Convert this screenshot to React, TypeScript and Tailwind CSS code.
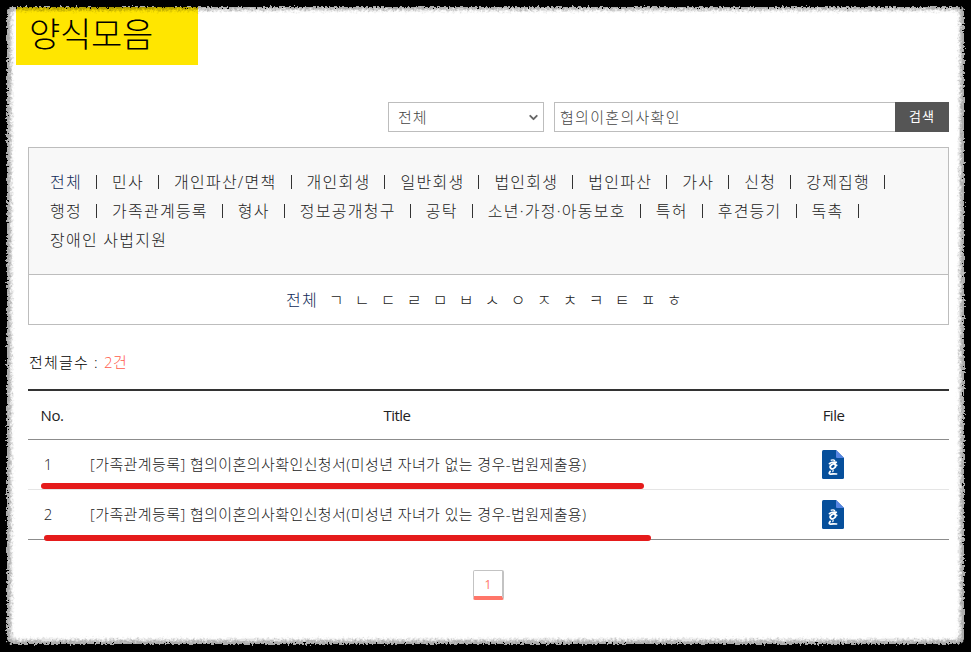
import { useState } from 'react';
import { ChevronDown } from 'lucide-react';

const categoryRows = [
    ['전체', '민사', '개인파산/면책', '개인회생', '일반회생', '법인회생', '법인파산', '가사', '신청', '강제집행'],
    ['행정', '가족관계등록', '형사', '정보공개청구', '공탁', '소년·가정·아동보호', '특허', '후견등기', '독촉'],
    ['장애인 사법지원'],
];

const consonants = ['ㄱ', 'ㄴ', 'ㄷ', 'ㄹ', 'ㅁ', 'ㅂ', 'ㅅ', 'ㅇ', 'ㅈ', 'ㅊ', 'ㅋ', 'ㅌ', 'ㅍ', 'ㅎ'];

const forms = [
    { no: 1, title: '[가족관계등록] 협의이혼의사확인신청서(미성년 자녀가 없는 경우-법원제출용)' },
    { no: 2, title: '[가족관계등록] 협의이혼의사확인신청서(미성년 자녀가 있는 경우-법원제출용)' },
];

const HwpIcon = () => (
    <svg width="22" height="29" viewBox="0 0 22 29">
        <path d="M1.5 0H14L22 8V27.5Q22 29 20.5 29H1.5Q0 29 0 27.5V1.5Q0 0 1.5 0Z" fill="#064f9b" />
        <path d="M14 0L22 8H15Q14 8 14 7Z" fill="#5585e2" />
        <g fill="none" stroke="#fff" strokeLinecap="round" strokeLinejoin="round">
            <path d="M9.3 10.2Q11.8 9.3 12.6 10.6" strokeWidth="1.4" />
            <path d="M7.4 13.6Q9.5 11.7 14.4 12.2L12.8 13.6" strokeWidth="1.6" />
            <ellipse cx="10.9" cy="16.4" rx="2.9" ry="2.1" strokeWidth="1.8" transform="rotate(-35 10.9 16.4)" />
            <path d="M13.4 15L14.8 15.3" strokeWidth="1.5" />
            <path d="M11.2 20.2L10.8 21.6" strokeWidth="1.2" />
            <path d="M8.2 21.4Q6 24 8.6 24.1Q11 23.6 14.6 24" strokeWidth="1.7" />
        </g>
    </svg>
);

// Rough torn edge that runs round the whole page
const TornFrame = () => (
    <svg className="pointer-events-none absolute inset-0" width="971" height="652">
        <defs>
            <filter id="rough" filterUnits="userSpaceOnUse" x="-20" y="-20" width="1011" height="692" colorInterpolationFilters="sRGB">
                <feGaussianBlur stdDeviation="0.6" result="b" />
                <feTurbulence type="fractalNoise" baseFrequency="0.5" numOctaves="2" seed="4" result="n" />
                <feDisplacementMap in="b" in2="n" scale="7" xChannelSelector="R" yChannelSelector="G" />
            </filter>
            <filter id="soft" filterUnits="userSpaceOnUse" x="-20" y="-20" width="1011" height="692" colorInterpolationFilters="sRGB">
                <feGaussianBlur stdDeviation="0.8" result="b" />
                <feTurbulence type="fractalNoise" baseFrequency="0.4" numOctaves="2" seed="9" result="n" />
                <feDisplacementMap in="b" in2="n" scale="6" xChannelSelector="R" yChannelSelector="G" />
            </filter>
        </defs>
        <path fillRule="evenodd" fill="#000" fillOpacity="0.14" filter="url(#soft)"
            d="M-20 -20H991V672H-20Z M18 11H954Q959 11 959 16V633Q959 639 953 639H18Q12 639 12 633V16Q12 11 18 11Z" />
        <path fillRule="evenodd" fill="#000" fillOpacity="0.22" filter="url(#soft)"
            d="M-20 -20H991V672H-20Z M16 9H956Q961 9 961 14V635Q961 641 955 641H16Q10 641 10 635V14Q10 9 16 9Z" />
        <path fillRule="evenodd" fill="#000" filter="url(#rough)"
            d="M-20 -20H991V672H-20Z M12 7H959Q964 7 964 12V638Q964 644 958 644H13Q7 644 7 638V12Q7 7 12 7Z" />
    </svg>
);

const App = () => {
    const [keyword, setKeyword] = useState('협의이혼의사확인');

    return (
        <div className="relative h-[652px] w-[971px] overflow-hidden bg-white pt-[7px] pr-[22px] pl-7 font-['Open_Sans','Noto_Sans_CJK_KR',sans-serif] font-light text-[#222]">
            <h1 className="-ml-3 h-[58px] w-[182px] bg-[#ffe600] pl-[13px] text-[34px] leading-[54px] font-light tracking-[-0.3px] whitespace-nowrap text-black">
                양식모음
            </h1>

            {/* Search */}
            <div className="mt-[37px] flex h-[30px] justify-end text-[15px] text-[#444]">
                <button className="flex w-[156px] items-center justify-between border border-[#bdbdbd] pr-[3px] pl-[9px] tracking-[1px]">
                    <span>전체</span>
                    <ChevronDown size={13} strokeWidth={3.5} className="text-[#666]" />
                </button>
                <input
                    className="ml-[10px] w-[341px] border border-r-0 border-[#bdbdbd] bg-white pl-[5px] tracking-[1.3px] outline-none"
                    value={keyword}
                    onChange={(e) => setKeyword(e.target.value)}
                />
                <button className="w-[54px] bg-[#555] text-[13px] font-normal tracking-[1px] text-white">검색</button>
            </div>

            {/* Categories */}
            <div className="mt-[15px] border border-[#bdbdbd]">
                <div className="h-[127px] border-b border-[#bdbdbd] bg-[#f8f8f8] pt-5 pl-[21px] text-[16px] leading-[29px] tracking-[1.26px]">
                    {categoryRows.map((row, i) => (
                        <div key={i} className="flex h-[29px] items-center whitespace-nowrap">
                            {row.map((name) => (
                                <a key={name} className={name === '전체' ? 'flex items-center text-[#102c58]' : 'flex items-center'}>
                                    {name}
                                    {i < 2 && <span className="mt-[-2px] mr-[15px] ml-[14px] h-[14px] w-px bg-[#333]" />}
                                </a>
                            ))}
                        </div>
                    ))}
                </div>
                <div className="flex h-[49px] items-center pl-[257px] text-[16px] tracking-[1.2px]">
                    <a className="w-[37px] text-[#102c58]">전체</a>
                    {consonants.map((c) => (
                        <a key={c} className="w-[26px] text-center text-[16px] tracking-normal">{c}</a>
                    ))}
                </div>
            </div>

            <p className="mt-[25px] h-6 pl-px text-[15px] leading-6 tracking-[1.2px] text-black">
                전체글수 : <span className="tracking-[0.5px] text-[#ff5c4c]">2건</span>
            </p>

            {/* Form list */}
            <div className="mt-[15px] border-t-2 border-b border-t-[#333] border-b-[#8c8c8c]">
                <div className="flex h-[49px] items-center border-b border-[#8c8c8c] text-[15px] font-normal tracking-[-0.5px] text-[#222]">
                    <span className="w-12 text-center">No.</span>
                    <span className="w-[642px] text-center">Title</span>
                    <span className="w-[231px] text-center">File</span>
                </div>
                {forms.map((form) => (
                    <div key={form.no} className={form.no === 1 ? 'relative flex h-[50px] items-center border-b border-[#e5e5e5]' : 'relative flex h-[49px] items-center'}>
                        <span className="w-10 text-center text-[15px]">{form.no}</span>
                        <a className="ml-[22px] w-[732px] text-[15px] tracking-[0.41px] whitespace-nowrap">{form.title}</a>
                        <HwpIcon />
                        <span
                            className={
                                form.no === 1
                                    ? 'absolute top-[43px] left-[13px] h-[6px] w-[603px] rounded-full bg-[#e51b1b]'
                                    : 'absolute top-[45px] left-4 z-10 h-[6px] w-[607px] rounded-full bg-[#e51b1b]'
                            }
                        />
                    </div>
                ))}
            </div>

            {/* Pagination */}
            <div className="mt-[30px] ml-[445px] flex h-[30px] w-[31px] items-center justify-center rounded-[2px] border border-r-2 border-b-4 border-[#c3c3c3] border-b-[#ff7669] pt-[3px] text-[12px] font-normal text-[#ff7669]">
                1
            </div>

            <TornFrame />
        </div>
    );
};

export default App;
